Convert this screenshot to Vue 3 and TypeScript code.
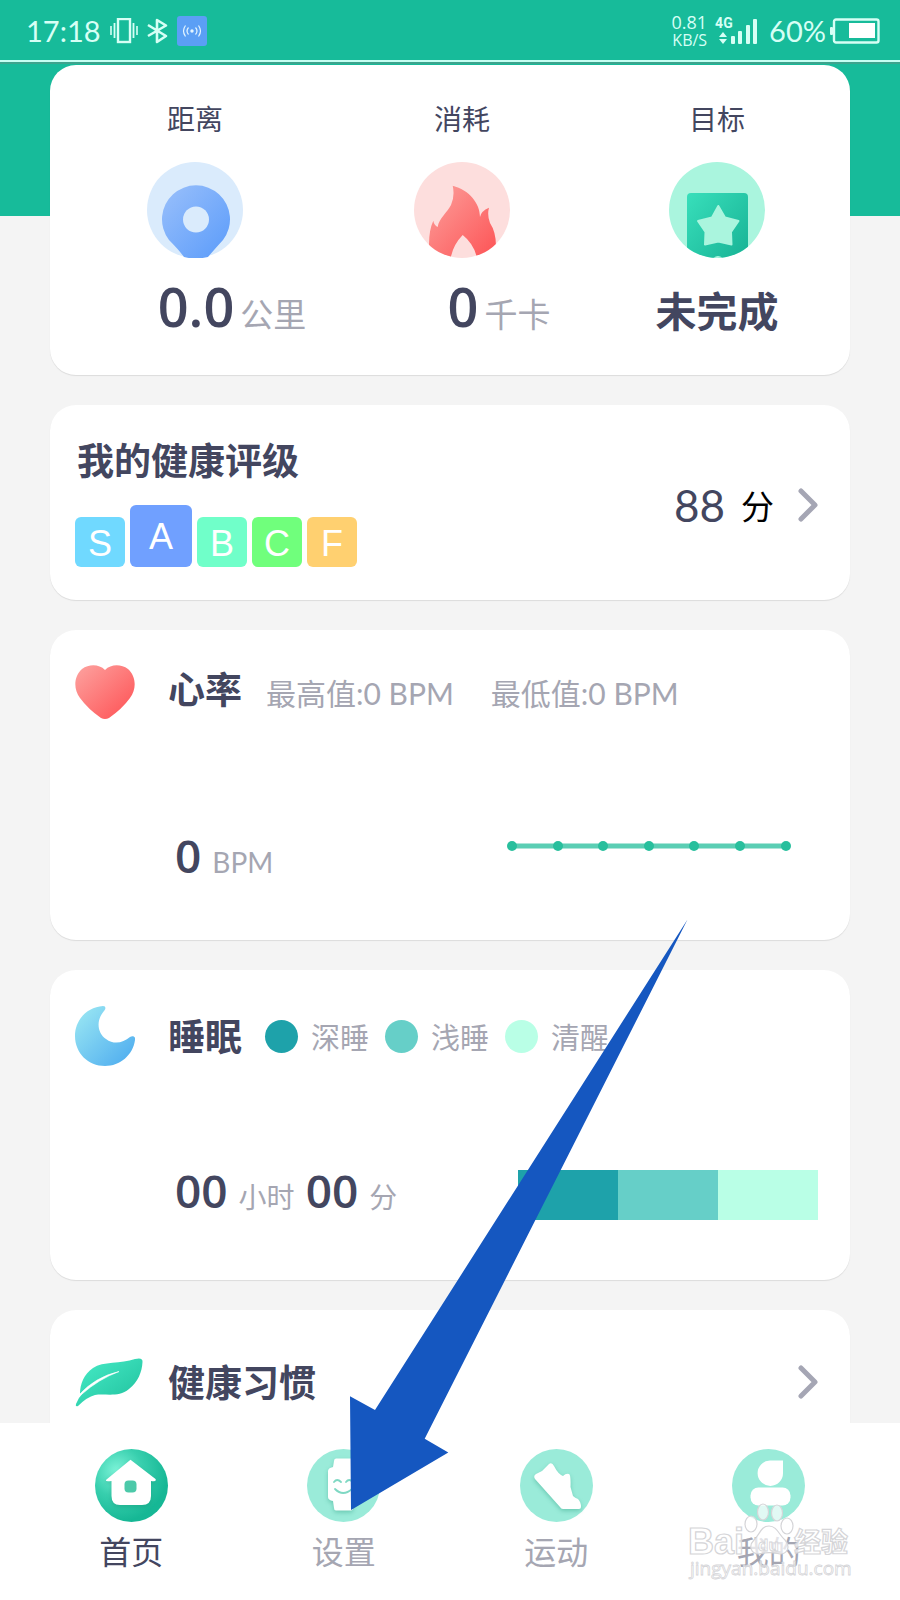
<script setup lang="ts">
interface Grade {
  letter: string
  tone: string
  active?: boolean
}

interface Stage {
  label: string
  tone: string
}

interface Tab {
  id: 'home' | 'settings' | 'sport' | 'mine'
  label: string
}

const grades: Grade[] = [
  { letter: 'S', tone: 'sky' },
  { letter: 'A', tone: 'blue', active: true },
  { letter: 'B', tone: 'mint' },
  { letter: 'C', tone: 'green' },
  { letter: 'F', tone: 'amber' },
]

const stages: Stage[] = [
  { label: '深睡', tone: 'deep' },
  { label: '浅睡', tone: 'light' },
  { label: '清醒', tone: 'awake' },
]

const tabs: Tab[] = [
  { id: 'home', label: '首页' },
  { id: 'settings', label: '设置' },
  { id: 'sport', label: '运动' },
  { id: 'mine', label: '我的' },
]

const activeTab: Tab['id'] = 'home'
const pulsePoints: number[] = [6, 52, 97, 143, 188, 234, 280]
</script>

<template>
  <div class="app">
    <header class="status">
      <div class="status-side">
        <span class="clock">17:18</span>
        <svg class="vibrate" viewBox="0 0 28 26" fill="none" stroke="#d6fff5">
          <rect x="8" y="1" width="12" height="23" stroke-width="2.4" />
          <path d="M4.500 5v15M23.500 5v15" stroke-width="1.800" />
          <path d="M1 8v9M27 8v9" stroke-width="1.600" />
        </svg>
        <svg class="bluetooth" viewBox="0 0 21 26" fill="none" stroke="#d6fff5" stroke-width="2.600" stroke-linejoin="round">
          <path d="M1 7l18 11-9 6V2l9 5.500L1 18" />
        </svg>
        <svg class="hotspot" viewBox="0 0 30 30">
          <rect width="30" height="30" rx="3" fill="#5b9ff5" />
          <circle cx="15" cy="15" r="1.700" fill="#e4f5ff" />
          <path d="M11.500 11.500q-3 3.500 0 7M18.500 11.500q3 3.500 0 7M8.500 9.500q-4 5.500 0 11M21.500 9.500q4 5.500 0 11" fill="none" stroke="#e4f5ff" stroke-width="1.200" />
        </svg>
      </div>
      <div class="status-side right">
        <span class="speed"><span>0.81</span><span class="speed-unit">KB/S</span></span>
        <span class="signal">
          <svg viewBox="0 0 42 28" fill="#d6fff5">
            <path d="M6 15l4 5H2zM6 27l-4-5h8z" />
            <rect x="14" y="19" width="4" height="8" rx="1" />
            <rect x="21" y="14" width="4" height="13" rx="1" />
            <rect x="29" y="8" width="4" height="19" rx="1" />
            <rect x="36" y="2" width="4" height="25" rx="1" />
          </svg>
          <span class="network">4G</span>
        </span>
        <span class="percent">60%</span>
        <svg class="battery" viewBox="0 0 50 26">
          <rect x="0" y="9" width="3" height="8" rx="1" fill="#d6fff5" />
          <rect x="4" y="1.500" width="44.500" height="23" rx="2" fill="none" stroke="#d6fff5" stroke-width="2.400" />
          <rect x="19" y="5" width="26" height="15" fill="#fff" />
        </svg>
      </div>
    </header>

    <main class="content">
      <section class="card summary">
        <div class="metric">
          <h2>距离</h2>
          <svg class="metric-icon" viewBox="0 0 96 96">
            <defs>
              <linearGradient id="pin" x1="0" y1="0" x2="1" y2="1">
                <stop offset="0" stop-color="#9ac0fb" />
                <stop offset="1" stop-color="#5a9bfa" />
              </linearGradient>
              <clipPath id="disc"><circle cx="48" cy="48" r="48" /></clipPath>
            </defs>
            <circle cx="48" cy="48" r="48" fill="#daebfc" />
            <path d="M37 95Q32 88 22 78A34 34 0 1 1 76 78Q66 89 61 95Q48 98 37 95Z" fill="url(#pin)" />
            <circle cx="49" cy="57.500" r="13" fill="#daebfc" />
          </svg>
          <p class="metric-value shifted"><strong>0.0</strong><span>公里</span></p>
        </div>
        <div class="metric">
          <h2>消耗</h2>
          <svg class="metric-icon" viewBox="0 0 96 96">
            <defs>
              <linearGradient id="fire" x1="0" y1="0" x2="1" y2="1">
                <stop offset="0" stop-color="#fca09c" />
                <stop offset="1" stop-color="#fd5355" />
              </linearGradient>
            </defs>
            <circle cx="48" cy="48" r="48" fill="#fddedd" />
            <g clip-path="url(#disc)">
              <path d="M38.700 23.700C55 28 66 41 66 55Q67 49 75 45.700Q73 53 76 61Q82 70 82 84V96H63Q60 82 48.700 73Q39 83 36.700 96H15V82Q15 68 19.300 58.700Q20 63 23.700 65C25 56 33 51 37 43Q41 34 38.700 23.700Z" fill="url(#fire)" />
            </g>
          </svg>
          <p class="metric-value shifted"><strong>0</strong><span>千卡</span></p>
        </div>
        <div class="metric">
          <h2>目标</h2>
          <svg class="metric-icon" viewBox="0 0 96 96">
            <defs>
              <linearGradient id="goal" x1="0" y1="0" x2="1" y2="1">
                <stop offset="0" stop-color="#38dfbb" />
                <stop offset="1" stop-color="#16b093" />
              </linearGradient>
            </defs>
            <circle cx="48" cy="48" r="48" fill="#aaf5de" />
            <g clip-path="url(#disc)">
              <rect x="18" y="31" width="61" height="72" rx="4" fill="url(#goal)" />
              <path d="M49.300 44L56 55.500L69.500 59L62 70L62.500 82.500L49.300 79.500L36 82.500L36.500 70L29 59L43 55.500Z" fill="#aaf5de" stroke="#aaf5de" stroke-width="2" stroke-linejoin="round" />
              <circle cx="49" cy="100" r="6" fill="#aaf5de" />
            </g>
          </svg>
          <p class="metric-value status-text"><b>未完成</b></p>
        </div>
      </section>

      <section class="card rating">
        <div>
          <h2 class="title">我的健康评级</h2>
          <div class="grades">
            <span v-for="grade in grades" :key="grade.letter" class="grade" :class="[grade.tone, { active: grade.active }]">{{ grade.letter }}</span>
          </div>
        </div>
        <a class="score" href="#rating">
          <span class="score-number">88</span>
          <span class="score-unit">分</span>
          <svg class="chevron" viewBox="0 0 20 34"><path d="M3 3l14 14L3 31" /></svg>
        </a>
      </section>

      <section class="card heart">
        <div class="card-head">
          <span class="icon-cell">
            <svg class="icon" viewBox="0 0 60 60">
              <defs>
                <linearGradient id="pulse" x1="0" y1="0" x2="1" y2="1">
                  <stop offset="0" stop-color="#fda3a0" />
                  <stop offset="1" stop-color="#fe4f52" />
                </linearGradient>
              </defs>
              <path d="M30 8C36 2 46 2 53 7C61 14 62 27 55 36Q47 47 34 56Q30 58 26 56Q13 47 5 36C-2 27-1 14 7 7C14 2 24 2 30 8Z" fill="url(#pulse)" />
            </svg>
          </span>
          <h2 class="title">心率</h2>
          <p class="range"><span>最高值:0 BPM</span><span>最低值:0 BPM</span></p>
        </div>
        <div class="card-body">
          <p class="reading"><strong>0</strong><span>BPM</span></p>
          <svg class="pulse-chart" viewBox="0 0 286 60">
            <path d="M6 21H280" stroke="#5bceb4" stroke-width="5" />
            <circle v-for="x in pulsePoints" :key="x" :cx="x" cy="21" r="5" fill="#28bf9d" />
          </svg>
        </div>
      </section>

      <section class="card sleep">
        <div class="card-head">
          <span class="icon-cell">
            <svg class="icon" viewBox="0 0 60 60">
              <defs>
                <linearGradient id="moon" x1="0" y1="0" x2="1" y2="1">
                  <stop offset="0" stop-color="#9eeaf3" />
                  <stop offset="1" stop-color="#4aa9ef" />
                </linearGradient>
              </defs>
              <path d="M28 0C31 0 31 3 29 5C21 14 22 27 31 33C39 39 48 37 55 31C58 29 61 31 60 34C58 49 45 60 30 60C13 60 0 47 0 30C0 14 12 1 28 0Z" fill="url(#moon)" />
            </svg>
          </span>
          <h2 class="title">睡眠</h2>
          <ul class="legend">
            <li v-for="stage in stages" :key="stage.tone"><i class="dot" :class="stage.tone"></i>{{ stage.label }}</li>
          </ul>
        </div>
        <div class="card-body">
          <p class="reading"><strong>00</strong><span>小时</span><strong>00</strong><span>分</span></p>
          <div class="sleep-bar"><i v-for="stage in stages" :key="stage.tone" :class="stage.tone"></i></div>
        </div>
      </section>

      <section class="card habits">
        <a class="card-head" href="#habits">
          <span class="icon-cell">
            <svg class="leaf" viewBox="0 0 68 50">
              <defs>
                <linearGradient id="leaf" x1="0" y1="0" x2="1" y2="1">
                  <stop offset="0" stop-color="#48edc8" />
                  <stop offset="1" stop-color="#1fbf9c" />
                </linearGradient>
              </defs>
              <path d="M5 37C5 27 9 17 18 11C28 4 46 7 60 2Q68 0 67.500 5C67 15 63 25 54 32C43 41 30 36 20 38Q12 40 3 49Q0 50 1 47Q3 41 8 36Z" fill="url(#leaf)" />
              <path d="M4 38Q20 20 44 14.500Q24 22 7 37Z" fill="#fff" stroke="#fff" stroke-width=".6" stroke-linejoin="round" />
            </svg>
          </span>
          <h2 class="title">健康习惯</h2>
          <svg class="chevron" viewBox="0 0 20 34"><path d="M3 3l14 14L3 31" /></svg>
        </a>
      </section>
    </main>

    <nav class="tabs">
      <button v-for="tab in tabs" :key="tab.id" type="button" :class="{ current: tab.id === activeTab }">
        <svg v-if="tab.id === 'home'" viewBox="0 0 73 73">
          <defs>
            <radialGradient id="home" cx=".3" cy=".3" r=".7">
              <stop offset="0" stop-color="#7ef4d9" />
              <stop offset=".5" stop-color="#38cfae" />
              <stop offset="1" stop-color="#16b795" />
            </radialGradient>
          </defs>
          <circle cx="36.500" cy="36.500" r="36.500" fill="url(#home)" />
          <path class="raised" d="M35.500 10.800L60.500 30Q62 33 56 32V47Q56 56 47 56H25Q16.500 56 16.500 47V32Q9 33 11.500 30.500Z" />
          <rect x="29.500" y="31.500" width="12" height="12" rx="4" fill="#4cc9a9" />
        </svg>
        <svg v-else-if="tab.id === 'settings'" viewBox="0 0 73 73">
          <circle cx="36.500" cy="36.500" r="36.500" fill="#9aebd9" />
          <path class="raised" d="M29 9.500H44Q46 9.500 46 12L47 18Q52 19 52 22V48Q52 51 47 52L46 59Q46 61.500 44 61.500H29Q27 61.500 27 59L26 52Q21 51 21 48V22Q21 19 26 18L27 12Q27 9.500 29 9.500Z" />
          <path d="M27 33q3-4 7 0M39 33q3-4 7 0M28 40q8 8 17 0" fill="none" stroke="#7fd8c3" stroke-width="1.800" stroke-linecap="round" />
        </svg>
        <svg v-else-if="tab.id === 'sport'" viewBox="0 0 73 73">
          <circle cx="36.500" cy="36.500" r="36.500" fill="#9aebd9" />
          <path class="raised" d="M15 30Q13 27 16 25L22 22L29 15Q32 13 34 17Q38 25 43 27Q46 24 49 25Q51 26 50.500 38L53 47Q55 49 58 50Q61 53 61 58Q61 60 59 60H43Q41 60 40 58Z" />
        </svg>
        <svg v-else viewBox="0 0 73 73">
          <circle cx="36.500" cy="36.500" r="36.500" fill="#9aebd9" />
          <path d="M51 11.500V24A12.700 12.700 0 1 1 38 11.500Z" fill="#fff" />
          <rect x="18.500" y="38.500" width="40" height="18" rx="8" fill="#fff" />
        </svg>
        <span>{{ tab.label }}</span>
      </button>
    </nav>

    <svg class="pointer" viewBox="0 0 100 592"><path d="M338.500 1.500L26 492L1 478.300L2 592L99.300 534.500L75.700 520.700Z" fill="#1557c0" /></svg>

    <svg class="watermark" viewBox="0 0 170 80">
      <g fill="#fff" fill-opacity=".7" stroke="#d5d5d8" stroke-width="1.200">
        <ellipse cx="64" cy="22" rx="6" ry="8" />
        <ellipse cx="76" cy="10" rx="5.500" ry="8" />
        <ellipse cx="90" cy="11" rx="5.500" ry="8" />
        <ellipse cx="100" cy="24" rx="6" ry="8" />
        <path d="M82 24C90 24 92 33 98 38C104 45 100 52 93 52C85 50 79 50 72 52C64 52 61 44 67 38C73 32 74 24 82 24Z" />
        <text class="brand" x="1" y="52" font-size="36">Bai</text>
        <text class="brand" x="71" y="49" font-size="17" stroke-width=".8">du</text>
        <text x="107" y="50" font-size="27" font-weight="700">经验</text>
        <text class="site" x="3" y="73" font-size="19" stroke-width=".8">jingyan.baidu.com</text>
      </g>
    </svg>
  </div>
</template>

<style>
html,
body {
  margin: 0;
  background: #f4f4f4;
}
</style>

<style scoped>
.app {
  position: relative;
  display: flex;
  flex-direction: column;
  height: 100vh;
  overflow: hidden;
  font-family: Lato, "Noto Sans CJK SC", sans-serif;
  color: #43465f;
}

h2,
p,
ul {
  margin: 0;
  padding: 0;
  list-style: none;
}

a {
  color: inherit;
  text-decoration: none;
}

svg {
  display: block;
  flex: none;
}

.status {
  display: flex;
  flex: none;
  align-items: center;
  justify-content: space-between;
  height: 60px;
  padding: 0 20px 0 26px;
  background: #17bb9a;
  border-bottom: 2px solid #c5fff2;
  box-shadow: 0 2px 0 #3da48d;
  color: #d6fff5;
  z-index: 1;
}

.status-side {
  display: flex;
  align-items: center;
  gap: 9px;
  padding-top: 2px;
}

.clock,
.percent {
  font-size: 29px;
  line-height: 36px;
}

.vibrate {
  width: 28px;
  height: 26px;
}

.bluetooth {
  width: 21px;
  height: 26px;
}

.hotspot {
  width: 30px;
  height: 30px;
}

.status-side.right {
  gap: 10px;
}

.speed {
  display: flex;
  flex-direction: column;
  align-items: flex-end;
  font: 18px/18px "Open Sans", sans-serif;
}

.speed-unit {
  font-size: 16px;
}

.signal {
  position: relative;
}

.signal svg {
  width: 42px;
  height: 28px;
}

.network {
  position: absolute;
  top: -2px;
  left: -2px;
  font: 700 14px/16px Roboto, sans-serif;
}

.battery {
  width: 50px;
  height: 26px;
  margin-left: -6px;
}

.content {
  display: flex;
  flex: 1;
  flex-direction: column;
  gap: 30px;
  min-height: 0;
  padding: 3px 50px 0;
  overflow: hidden;
  background: linear-gradient(#17bb9a 154px, #f4f4f4 154px);
}

.card {
  flex: none;
  background: #fff;
  border-radius: 26px;
  box-shadow: 0 1px 1px rgba(0, 0, 0, 0.1);
}

.summary {
  display: grid;
  grid-template-columns: 290fr 244fr 266fr;
  padding: 36px 0 33px;
}

.metric {
  display: flex;
  flex-direction: column;
  align-items: center;
}

.metric h2 {
  font-size: 28px;
  font-weight: 400;
  line-height: 36px;
}

.metric-icon {
  width: 96px;
  height: 96px;
  margin-top: 25px;
}

.metric-value {
  display: flex;
  align-items: baseline;
  gap: 6px;
  height: 72px;
  margin-top: 12px;
  line-height: 72px;
}

.metric-value strong {
  font-family: "Open Sans", sans-serif;
  font-size: 54px;
  font-weight: 600;
}

.metric-value b {
  font-size: 41px;
}

.metric-value span {
  font-size: 33px;
  color: #a5a6b2;
}

.shifted {
  padding-left: 74px;
}

.status-text {
  line-height: 84px;
}

.title {
  font-size: 37px;
  font-weight: 700;
  line-height: 45px;
}

.rating {
  display: flex;
  align-items: center;
  justify-content: space-between;
  padding: 33px 32px 33px 25px;
}

.rating .title {
  padding-left: 2px;
}

.grades {
  display: flex;
  align-items: flex-end;
  gap: 5px;
  margin-top: 22px;
}

.grade {
  width: 50px;
  height: 50px;
  border-radius: 6px;
  color: #fff;
  font: 36px/53px "Liberation Sans", Arial, sans-serif;
  text-align: center;
}

.grade.active {
  width: 62px;
  height: 62px;
  line-height: 64px;
}

.sky { background: #70d9ff; }
.blue { background: #70a0ff; }
.mint { background: #70ffc9; }
.green { background: #70ff7c; }
.amber { background: #ffd070; }

.score {
  display: flex;
  align-items: center;
  padding-top: 5px;
}

.score-number {
  font-size: 44px;
  line-height: 56px;
}

.score-unit {
  margin: 0 24px 0 16px;
  color: #000;
  font-size: 33px;
}

.chevron {
  width: 20px;
  height: 34px;
  fill: none;
  stroke: #a5a6b4;
  stroke-width: 5;
  stroke-linecap: round;
  stroke-linejoin: round;
}

.heart {
  padding: 32px 32px 55px 25px;
}

.heart .title {
  padding-bottom: 6px;
}

.heart .card-body {
  margin-top: 103px;
}

.sleep {
  padding: 36px 32px 55px 25px;
}

.sleep .card-body {
  margin-top: 99px;
}

.sleep .reading {
  padding-bottom: 10px;
}

.habits {
  padding: 42px 32px 40px 25px;
}

.habits .chevron {
  margin-left: auto;
}

.card-head,
.card-body {
  display: flex;
  align-items: center;
  height: 60px;
}

.icon-cell {
  width: 93px;
}

.icon {
  width: 60px;
  height: 60px;
}

.leaf {
  width: 68px;
  height: 50px;
}

.range {
  display: flex;
  gap: 37px;
  margin-left: 24px;
  color: #a5a6b2;
  font-size: 30px;
  white-space: nowrap;
}

.card-body {
  justify-content: space-between;
  padding-left: 100px;
}

.reading {
  display: flex;
  align-items: baseline;
  gap: 11px;
}

.reading strong {
  font-family: "Open Sans", sans-serif;
  font-size: 46px;
  font-weight: 600;
  line-height: 60px;
}

.reading span {
  color: #a5a6b2;
  font-size: 28px;
}

.pulse-chart {
  width: 286px;
  height: 60px;
  margin-right: 26px;
}

.legend {
  display: flex;
  gap: 16px;
  margin-left: 23px;
  color: #a5a6b2;
  font-size: 29px;
}

.legend li {
  display: flex;
  align-items: center;
  gap: 13px;
}

.dot {
  width: 33px;
  height: 33px;
  border-radius: 50%;
}

.deep { background: #1ea2aa; }
.light { background: #66cfc8; }
.awake { background: #b9ffe6; }

.sleep-bar {
  display: flex;
  width: 300px;
  height: 50px;
}

.sleep-bar i {
  flex: 1;
}

.tabs {
  display: grid;
  flex: none;
  grid-template-columns: repeat(4, 1fr);
  padding: 26px 25px 28px;
  background: #fff;
}

.tabs button {
  display: flex;
  flex-direction: column;
  align-items: center;
  gap: 10px;
  padding: 0;
  border: 0;
  background: none;
  color: #a5a6b2;
  font: 32px/40px Lato, "Noto Sans CJK SC", sans-serif;
}

.tabs .current {
  color: #43465f;
}

.tabs svg {
  width: 73px;
  height: 73px;
}

.raised {
  fill: #fff;
  filter: drop-shadow(0 2px 2px rgba(20, 140, 110, 0.35));
}

.pointer {
  position: absolute;
  bottom: 90px;
  left: 349px;
  width: 100px;
  height: 592px;
  overflow: visible;
  pointer-events: none;
}

.watermark {
  position: absolute;
  right: 43px;
  bottom: 18px;
  width: 170px;
  height: 80px;
  pointer-events: none;
}

.brand {
  font-family: "Liberation Sans", Arial, sans-serif;
  font-weight: 700;
}

.site {
  font-family: "Open Sans", sans-serif;
}
</style>
